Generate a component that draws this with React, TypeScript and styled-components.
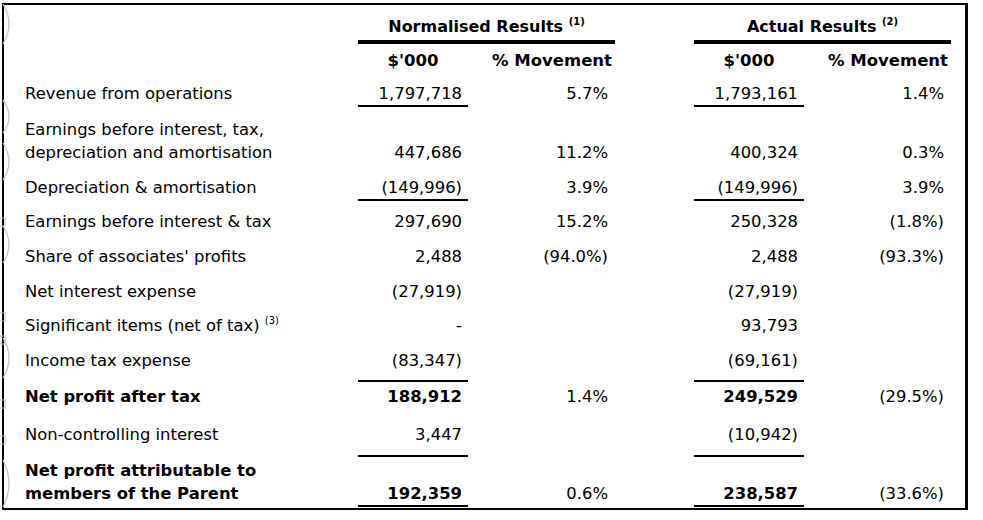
import React from "react";
import styled, { createGlobalStyle } from "styled-components";

const Global = createGlobalStyle`
  html, body { margin: 0; padding: 0; background: #fff; }
  body { font-family: "DejaVu Sans", Verdana, sans-serif; color: #000; }
`;

const Page = styled.div`
  position: relative;
  padding: 3px 0 0 2px;
  width: 983px;
  height: 520px;
  box-sizing: border-box;
`;

const Box = styled.div`
  box-sizing: border-box;
  width: 966px;
  border: 2px solid #000;
  border-right-width: 3px;
  padding: 0 0 1px 21px;
  font-size: 16.4px;
  line-height: 23px;
`;

const Row = styled.div<{ $pt: number }>`
  display: grid;
  grid-template-columns: 333px 110px 147px 79px 110px 147px;
  align-items: end;
  padding-top: ${(p) => p.$pt}px;
`;

const Label = styled.div<{ $pb: number; $bold?: boolean }>`
  grid-column: 1;
  padding-bottom: ${(p) => p.$pb + 2}px;
  font-weight: ${(p) => (p.$bold ? 700 : 400)};
`;

const Num = styled.div<{ $col: number; $pb: number; $line?: boolean; $bold?: boolean }>`
  grid-column: ${(p) => p.$col};
  text-align: right;
  padding-right: 6px;
  padding-bottom: ${(p) => p.$pb}px;
  border-bottom: 2px solid ${(p) => (p.$line ? "#000" : "transparent")};
  font-weight: ${(p) => (p.$bold ? 700 : 400)};
`;

const Pct = styled.div<{ $col: number; $pb: number }>`
  grid-column: ${(p) => p.$col};
  text-align: right;
  padding-right: 7px;
  padding-bottom: ${(p) => p.$pb + 2}px;
`;

const GroupHead = styled.div<{ $col: number }>`
  grid-column: ${(p) => p.$col} / span 2;
  text-align: center;
  font-size: 16px;
  font-weight: 700;
  padding-bottom: 2px;
  border-bottom: 4px solid #000;
`;

const ColHead = styled.div<{ $col: number; $align: "center" | "right" }>`
  grid-column: ${(p) => p.$col};
  text-align: ${(p) => p.$align};
  padding-right: ${(p) => (p.$align === "right" ? 3 : 0)}px;
  font-size: 16.5px;
  font-weight: 700;
`;

const Sup = styled.sup`
  font-size: 10px;
  line-height: 0;
  vertical-align: 7px;
`;

const Marks = styled.svg`
  position: absolute;
  left: 0;
  top: 0;
  pointer-events: none;
`;

type Line = {
  label: React.ReactNode;
  pt: number;
  pb: number;
  bold?: boolean;
  n: string;
  np?: string;
  a: string;
  ap?: string;
  line?: boolean;
};

const rows: Line[] = [
  { label: "Revenue from operations", pt: 10, pb: 0, n: "1,797,718", np: "5.7%", a: "1,793,161", ap: "1.4%", line: true },
  {
    label: (
      <>
        Earnings before interest, tax,
        <br />
        depreciation and amortisation
      </>
    ),
    pt: 11,
    pb: 0,
    n: "447,686",
    np: "11.2%",
    a: "400,324",
    ap: "0.3%",
  },
  { label: "Depreciation & amortisation", pt: 10, pb: 0, n: "(149,996)", np: "3.9%", a: "(149,996)", ap: "3.9%", line: true },
  { label: "Earnings before interest & tax", pt: 9, pb: 0, n: "297,690", np: "15.2%", a: "250,328", ap: "(1.8%)" },
  { label: "Share of associates' profits", pt: 10, pb: 0, n: "2,488", np: "(94.0%)", a: "2,488", ap: "(93.3%)" },
  { label: "Net interest expense", pt: 10, pb: 0, n: "(27,919)", a: "(27,919)" },
  {
    label: (
      <>
        Significant items (net of tax) <Sup>(3)</Sup>
      </>
    ),
    pt: 9,
    pb: 0,
    n: "-",
    a: "93,793",
  },
  { label: "Income tax expense", pt: 10, pb: 8, n: "(83,347)", a: "(69,161)", line: true },
  { label: "Net profit after tax", pt: 3, pb: 0, bold: true, n: "188,912", np: "1.4%", a: "249,529", ap: "(29.5%)" },
  { label: "Non-controlling interest", pt: 13, pb: 9, n: "3,447", a: "(10,942)", line: true },
  {
    label: (
      <>
        Net profit attributable to
        <br />
        members of the Parent
      </>
    ),
    pt: 2,
    pb: 0,
    bold: true,
    n: "192,359",
    np: "0.6%",
    a: "238,587",
    ap: "(33.6%)",
    line: true,
  },
];

const arcs: [number, number][] = [
  [4, 44],
  [100, 133],
  [143, 180],
  [226, 263],
  [338, 378],
  [460, 507],
];
const ticks = [218, 313, 336, 400, 436];

export default function App() {
  return (
    <>
      <Global />
      <Page>
        <Box>
          <Row $pt={10}>
            <GroupHead $col={2}>
              Normalised Results <Sup>(1)</Sup>
            </GroupHead>
            <GroupHead $col={5}>
              Actual Results <Sup>(2)</Sup>
            </GroupHead>
          </Row>
          <Row $pt={5}>
            <ColHead $col={2} $align="center">$'000</ColHead>
            <ColHead $col={3} $align="right">% Movement</ColHead>
            <ColHead $col={5} $align="center">$'000</ColHead>
            <ColHead $col={6} $align="right">% Movement</ColHead>
          </Row>
          {rows.map((r, i) => (
            <Row key={i} $pt={r.pt}>
              <Label $pb={r.pb} $bold={r.bold}>
                {r.label}
              </Label>
              <Num $col={2} $pb={r.pb} $line={r.line} $bold={r.bold}>
                {r.n}
              </Num>
              <Pct $col={3} $pb={r.pb}>{r.np ?? ""}</Pct>
              <Num $col={5} $pb={r.pb} $line={r.line} $bold={r.bold}>
                {r.a}
              </Num>
              <Pct $col={6} $pb={r.pb}>{r.ap ?? ""}</Pct>
            </Row>
          ))}
        </Box>
        <Marks width="14" height="520" viewBox="0 0 14 520">
          {arcs.map(([a, b], i) => (
            <path
              key={i}
              d={`M3 ${a} Q15 ${(a + b) / 2} 3 ${b}`}
              fill="none"
              stroke="#c4c4c4"
              strokeWidth="1.3"
            />
          ))}
          {ticks.map((y, i) => (
            <path key={i} d={`M0 ${y} H5 V${y + 8} H0`} fill="none" stroke="#c4c4c4" strokeWidth="1.2" />
          ))}
        </Marks>
      </Page>
    </>
  );
}
